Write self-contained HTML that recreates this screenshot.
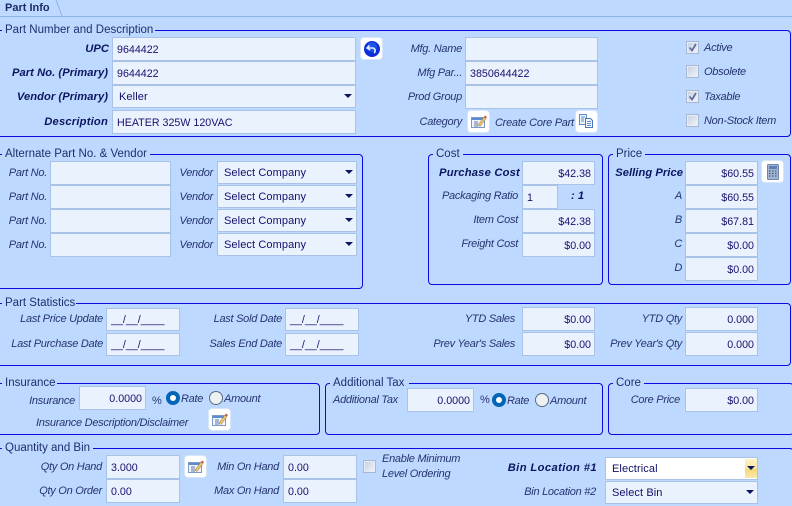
<!DOCTYPE html>
<html><head><meta charset="utf-8"><style>
html,body{margin:0;padding:0;overflow:hidden;width:792px;height:506px}
body{background:#bdd9ff;font:11px/14px "Liberation Sans",sans-serif;color:#10106a}
#w{position:absolute;left:0;top:0;width:792px;height:506px;overflow:hidden;background:#bdd9ff}
div,svg.a{position:absolute;box-sizing:border-box}
.g{border:1px solid #0a0ae6;border-radius:4px}
.t{background:#bdd9ff;color:#1f2f6e;white-space:nowrap;padding:0 3px;height:14px;line-height:14px;font-size:11.5px;margin-top:1px}
.l{font-style:italic;color:#26346f;text-align:right;white-space:nowrap;height:14px;line-height:14px;left:0;font-size:11px;letter-spacing:-.27px;margin-top:1px}
.lf{font-style:italic;color:#26346f;white-space:nowrap;height:14px;line-height:14px;font-size:11px;letter-spacing:-.27px;margin-top:1px}
.b{font-weight:bold;color:#0c1660;font-size:11.2px;letter-spacing:.05px}
.f{background:#e9f2fd;border:1px solid #a9c3e8;color:#1c1070;padding:0 4px 0 4px;white-space:nowrap;font-size:10.7px;height:24px;line-height:24px}
.r{text-align:right;padding-right:3px}
.s{background:#e9f2fd;border:1px solid #a9c3e8;color:#10106a;padding-left:6px;white-space:nowrap;font-size:11px;letter-spacing:.1px;height:23px;line-height:22px}
.s:after{content:"";position:absolute;right:3px;top:8px;border:4px solid transparent;border-top:4px solid #0c1660;border-bottom:0}
.btn{width:23px;height:23px;background:#fff;border:1px solid #d8e6f8;border-radius:4px}
.c{width:13px;height:13px;background:linear-gradient(135deg,#c4cfe0,#f2f5fa);border:1px solid #a9b8d2;box-shadow:inset 0 0 0 1px #e8edf5}
.o{width:14px;height:14px;border-radius:50%;border:1px solid #5d6b80;background:#eef1f4}
.on{border:4px solid #0465b6;background:#fff}
</style></head><body><div id="w">

<!-- tab -->
<div style="left:0;top:16px;width:792px;height:1px;background:#8fb4e6"></div>
<svg class="a" style="left:52px;top:0" width="14" height="17"><path d="M4 0L10 16" stroke="#8fb4e6" fill="none"/></svg>
<div style="left:5px;top:1px;height:14px;line-height:14px;font-weight:bold;color:#1c2a6a;white-space:nowrap">Part Info</div>

<!-- group 1 -->
<div class="g" style="left:-6px;top:30px;width:797px;height:107px"></div>
<div class="t" style="left:2px;top:22px;width:153px">Part Number and Description</div>
<div class="l b" style="width:109px;top:41px">UPC</div>
<div class="l b" style="width:108px;top:65px">Part No. (Primary)</div>
<div class="l b" style="width:108px;top:89px">Vendor (Primary)</div>
<div class="l b" style="width:108px;top:114px;letter-spacing:.2px">Description</div>
<div class="f" style="left:112px;top:37px;width:244px">9644422</div>
<div class="f" style="left:112px;top:61px;width:244px">9644422</div>
<div class="s" style="left:112px;top:85px;width:244px;height:23px">Keller</div>
<div class="f" style="left:112px;top:110px;width:244px">HEATER 325W 120VAC</div>
<div class="btn" style="left:360px;top:37px"><svg class="a" style="left:0;top:0" width="21" height="21"><circle cx="11" cy="11" r="8" fill="#0a2fd8"/><circle cx="11" cy="9" r="5" fill="#2f6cf2" opacity=".6"/><path d="M8.500 7.500L6 10L9 12M6.500 10H12a2.800 2.800 0 0 1 1 5" stroke="#dfeaff" stroke-width="1.600" fill="none"/></svg></div>

<div class="l" style="width:462px;top:41px">Mfg. Name</div>
<div class="l" style="width:462px;top:65px">Mfg Par...</div>
<div class="l" style="width:462px;top:89px">Prod Group</div>
<div class="l" style="width:462px;top:114px">Category</div>
<div class="f" style="left:465px;top:37px;width:133px"></div>
<div class="f" style="left:465px;top:61px;width:133px">3850644422</div>
<div class="f" style="left:465px;top:85px;width:133px"></div>
<div class="btn" style="left:467px;top:110px"><svg class="a" style="left:0;top:0" width="21" height="21"><rect x="3.500" y="6.500" width="13" height="10" fill="#f2f6fc" stroke="#7d9ac6"/><rect x="4" y="7" width="12" height="2" fill="#5b8bd0"/><path d="M6 11h4M6 13h4M6 15h4" stroke="#5d77a5"/><path d="M10 14L16 6l2 1.500-6 8z" fill="#ecc56e" stroke="#8f6a2e" stroke-width=".5"/><path d="M16 6l1-1.500 2 1.500-1 1.500z" fill="#c05a48"/></svg></div>
<div class="lf" style="left:495px;top:115px">Create Core Part</div>
<div class="btn" style="left:575px;top:110px"><svg class="a" style="left:0;top:0" width="21" height="21"><path d="M3.500 3.500h7v10h-7z" fill="#eef4fd" stroke="#6189c8"/><path d="M9.500 7.500h5l2 2v7h-7z" fill="#f5f8fe" stroke="#4c76ba"/><path d="M11 10.500h4M11 12.500h4M11 14.500h4M5 6h4M5 8h3M5 10h3" stroke="#5f89c8"/></svg></div>

<div class="c" style="left:686px;top:41px"><svg class="a" style="left:0;top:0" width="11" height="11"><path d="M2.500 5.500L5 8.500L9 2" stroke="#5b6b9a" stroke-width="1.700" fill="none"/></svg></div>
<div class="c" style="left:686px;top:65px"></div>
<div class="c" style="left:686px;top:90px"><svg class="a" style="left:0;top:0" width="11" height="11"><path d="M2.500 5.500L5 8.500L9 2" stroke="#5b6b9a" stroke-width="1.700" fill="none"/></svg></div>
<div class="c" style="left:686px;top:114px"></div>
<div class="lf" style="left:704px;top:40px">Active</div>
<div class="lf" style="left:704px;top:64px">Obsolete</div>
<div class="lf" style="left:704px;top:89px">Taxable</div>
<div class="lf" style="left:704px;top:113px">Non-Stock Item</div>

<!-- group 2 -->
<div class="g" style="left:-6px;top:154px;width:369px;height:135px"></div>
<div class="t" style="left:2px;top:146px;width:148px">Alternate Part No. &amp; Vendor</div>
<div class="l" style="width:47px;top:165px">Part No.</div>
<div class="l" style="width:47px;top:189px">Part No.</div>
<div class="l" style="width:47px;top:213px">Part No.</div>
<div class="l" style="width:47px;top:237px">Part No.</div>
<div class="f" style="left:50px;top:161px;width:121px"></div>
<div class="f" style="left:50px;top:185px;width:121px"></div>
<div class="f" style="left:50px;top:209px;width:121px"></div>
<div class="f" style="left:50px;top:233px;width:121px"></div>
<div class="l" style="width:213px;top:165px">Vendor</div>
<div class="l" style="width:213px;top:189px">Vendor</div>
<div class="l" style="width:213px;top:213px">Vendor</div>
<div class="l" style="width:213px;top:237px">Vendor</div>
<div class="s" style="left:217px;top:161px;width:140px">Select Company</div>
<div class="s" style="left:217px;top:185px;width:140px">Select Company</div>
<div class="s" style="left:217px;top:209px;width:140px">Select Company</div>
<div class="s" style="left:217px;top:233px;width:140px">Select Company</div>

<!-- cost -->
<div class="g" style="left:428px;top:154px;width:175px;height:131px"></div>
<div class="t" style="left:433px;top:146px;">Cost</div>
<div class="l b" style="width:520px;top:165px;letter-spacing:.2px">Purchase Cost</div>
<div class="l" style="width:518px;top:188px">Packaging Ratio</div>
<div class="l" style="width:518px;top:212px">Item Cost</div>
<div class="l" style="width:518px;top:236px">Freight Cost</div>
<div class="f r" style="left:522px;top:161px;width:73px">$42.38</div>
<div class="f" style="left:522px;top:185px;width:36px">1</div>
<div class="lf b" style="left:571px;top:188px">: 1</div>
<div class="f r" style="left:522px;top:209px;width:73px">$42.38</div>
<div class="f r" style="left:522px;top:233px;width:73px">$0.00</div>

<!-- price -->
<div class="g" style="left:608px;top:154px;width:183px;height:131px"></div>
<div class="t" style="left:613px;top:146px">Price</div>
<div class="l b" style="width:683px;top:165px">Selling Price</div>
<div class="l" style="width:682px;top:188px">A</div>
<div class="l" style="width:682px;top:212px">B</div>
<div class="l" style="width:682px;top:236px">C</div>
<div class="l" style="width:682px;top:260px">D</div>
<div class="f r" style="left:685px;top:161px;width:73px">$60.55</div>
<div class="f r" style="left:685px;top:185px;width:73px">$60.55</div>
<div class="f r" style="left:685px;top:209px;width:73px">$67.81</div>
<div class="f r" style="left:685px;top:233px;width:73px">$0.00</div>
<div class="f r" style="left:685px;top:257px;width:73px">$0.00</div>
<div class="btn" style="left:761px;top:160px"><svg class="a" style="left:0;top:0" width="21" height="21"><rect x="5.500" y="3.500" width="11" height="15" rx="1" fill="#a3b5d2" stroke="#6f84ab"/><rect x="7" y="5" width="8" height="3" fill="#5c7db5"/><path d="M7 10h1.500M10 10h1.500M13 10h1.500M7 12.500h1.500M10 12.500h1.500M13 12.500h1.500M7 15h1.500M10 15h1.500M13 15h1.500" stroke="#4a5d86" stroke-width="1.200"/></svg></div>

<!-- stats -->
<div class="g" style="left:-6px;top:303px;width:797px;height:63px"></div>
<div class="t" style="left:2px;top:295px;width:74px">Part Statistics</div>
<div class="l" style="width:103px;top:311px">Last Price Update</div>
<div class="l" style="width:103px;top:336px">Last Purchase Date</div>
<div class="f" style="left:106px;top:308px;width:74px;height:23px;line-height:23px">__/__/____</div>
<div class="f" style="left:106px;top:333px;width:74px;height:23px;line-height:23px">__/__/____</div>
<div class="l" style="width:282px;top:311px">Last Sold Date</div>
<div class="l" style="width:282px;top:336px">Sales End Date</div>
<div class="f" style="left:285px;top:308px;width:74px;height:23px;line-height:23px">__/__/____</div>
<div class="f" style="left:285px;top:333px;width:74px;height:23px;line-height:23px">__/__/____</div>
<div class="l" style="width:515px;top:311px">YTD Sales</div>
<div class="l" style="width:515px;top:336px">Prev Year's Sales</div>
<div class="f r" style="left:522px;top:307px;width:73px">$0.00</div>
<div class="f r" style="left:522px;top:332px;width:73px">$0.00</div>
<div class="l" style="width:682px;top:311px">YTD Qty</div>
<div class="l" style="width:682px;top:336px">Prev Year's Qty</div>
<div class="f r" style="left:685px;top:307px;width:73px">0.000</div>
<div class="f r" style="left:685px;top:332px;width:73px">0.000</div>

<!-- insurance -->
<div class="g" style="left:-6px;top:383px;width:326px;height:52px"></div>
<div class="t" style="left:2px;top:375px;width:55px">Insurance</div>
<div class="l" style="width:75px;top:393px">Insurance</div>
<div class="f r" style="left:79px;top:386px;width:67px">0.0000</div>
<div class="lf" style="left:152px;top:393px;font-style:normal">%</div>
<div class="o on" style="left:166px;top:391px"></div>
<div class="lf" style="left:181px;top:391px">Rate</div>
<div class="o" style="left:209px;top:391px"></div>
<div class="lf" style="left:224px;top:391px">Amount</div>
<div class="lf" style="left:36px;top:415px">Insurance Description/Disclaimer</div>
<div class="btn" style="left:208px;top:408px"><svg class="a" style="left:0;top:0" width="21" height="21"><rect x="3.500" y="6.500" width="13" height="10" fill="#f2f6fc" stroke="#7d9ac6"/><rect x="4" y="7" width="12" height="2" fill="#5b8bd0"/><path d="M6 11h4M6 13h4M6 15h4" stroke="#5d77a5"/><path d="M10 14L16 6l2 1.500-6 8z" fill="#ecc56e" stroke="#8f6a2e" stroke-width=".5"/><path d="M16 6l1-1.500 2 1.500-1 1.500z" fill="#c05a48"/></svg></div>

<div class="g" style="left:325px;top:383px;width:278px;height:52px"></div>
<div class="t" style="left:330px;top:375px;width:79px">Additional Tax</div>
<div class="lf" style="left:333px;top:392px">Additional Tax</div>
<div class="f r" style="left:407px;top:388px;width:67px">0.0000</div>
<div class="lf" style="left:480px;top:392px;font-style:normal">%</div>
<div class="o on" style="left:492px;top:393px"></div>
<div class="lf" style="left:507px;top:393px">Rate</div>
<div class="o" style="left:535px;top:393px"></div>
<div class="lf" style="left:550px;top:393px">Amount</div>

<div class="g" style="left:608px;top:383px;width:186px;height:52px"></div>
<div class="t" style="left:613px;top:375px">Core</div>
<div class="l" style="width:680px;top:392px">Core Price</div>
<div class="f r" style="left:685px;top:388px;width:73px">$0.00</div>

<!-- quantity -->
<div class="g" style="left:-6px;top:448px;width:800px;height:70px"></div>
<div class="t" style="left:2px;top:440px;width:91px">Quantity and Bin</div>
<div class="l" style="width:102px;top:459px">Qty On Hand</div>
<div class="l" style="width:102px;top:483px">Qty On Order</div>
<div class="f" style="left:106px;top:455px;width:74px">3.000</div>
<div class="f" style="left:106px;top:479px;width:74px">0.00</div>
<div class="btn" style="left:184px;top:455px"><svg class="a" style="left:0;top:0" width="21" height="21"><rect x="3.500" y="6.500" width="13" height="10" fill="#f2f6fc" stroke="#7d9ac6"/><rect x="4" y="7" width="12" height="2" fill="#5b8bd0"/><path d="M6 11h4M6 13h4M6 15h4" stroke="#5d77a5"/><path d="M10 14L16 6l2 1.500-6 8z" fill="#ecc56e" stroke="#8f6a2e" stroke-width=".5"/><path d="M16 6l1-1.500 2 1.500-1 1.500z" fill="#c05a48"/></svg></div>
<div class="l" style="width:279px;top:459px">Min On Hand</div>
<div class="l" style="width:279px;top:483px">Max On Hand</div>
<div class="f" style="left:283px;top:455px;width:74px">0.00</div>
<div class="f" style="left:283px;top:479px;width:74px">0.00</div>
<div class="c" style="left:363px;top:460px"></div>
<div class="lf" style="left:382px;top:451px">Enable Minimum</div>
<div class="lf" style="left:382px;top:466px">Level Ordering</div>
<div class="l b" style="width:597px;top:460px;letter-spacing:.4px">Bin Location #1</div>
<div class="l" style="width:596px;top:484px">Bin Location #2</div>
<div class="s" style="left:605px;top:457px;width:153px;background:#fff;padding-left:6px">Electrical</div>
<div style="left:745px;top:459px;width:12px;height:19px;background:linear-gradient(#fdf3c4 0,#fbe7a0 50%,#f5d77a 55%,#fbe9ac 100%)"></div>
<div style="left:747px;top:466px;width:0;height:0;border:4px solid transparent;border-top:4px solid #0c1660;border-bottom:0"></div>
<div class="s" style="left:605px;top:481px;width:153px">Select Bin</div>
</div></body></html>
